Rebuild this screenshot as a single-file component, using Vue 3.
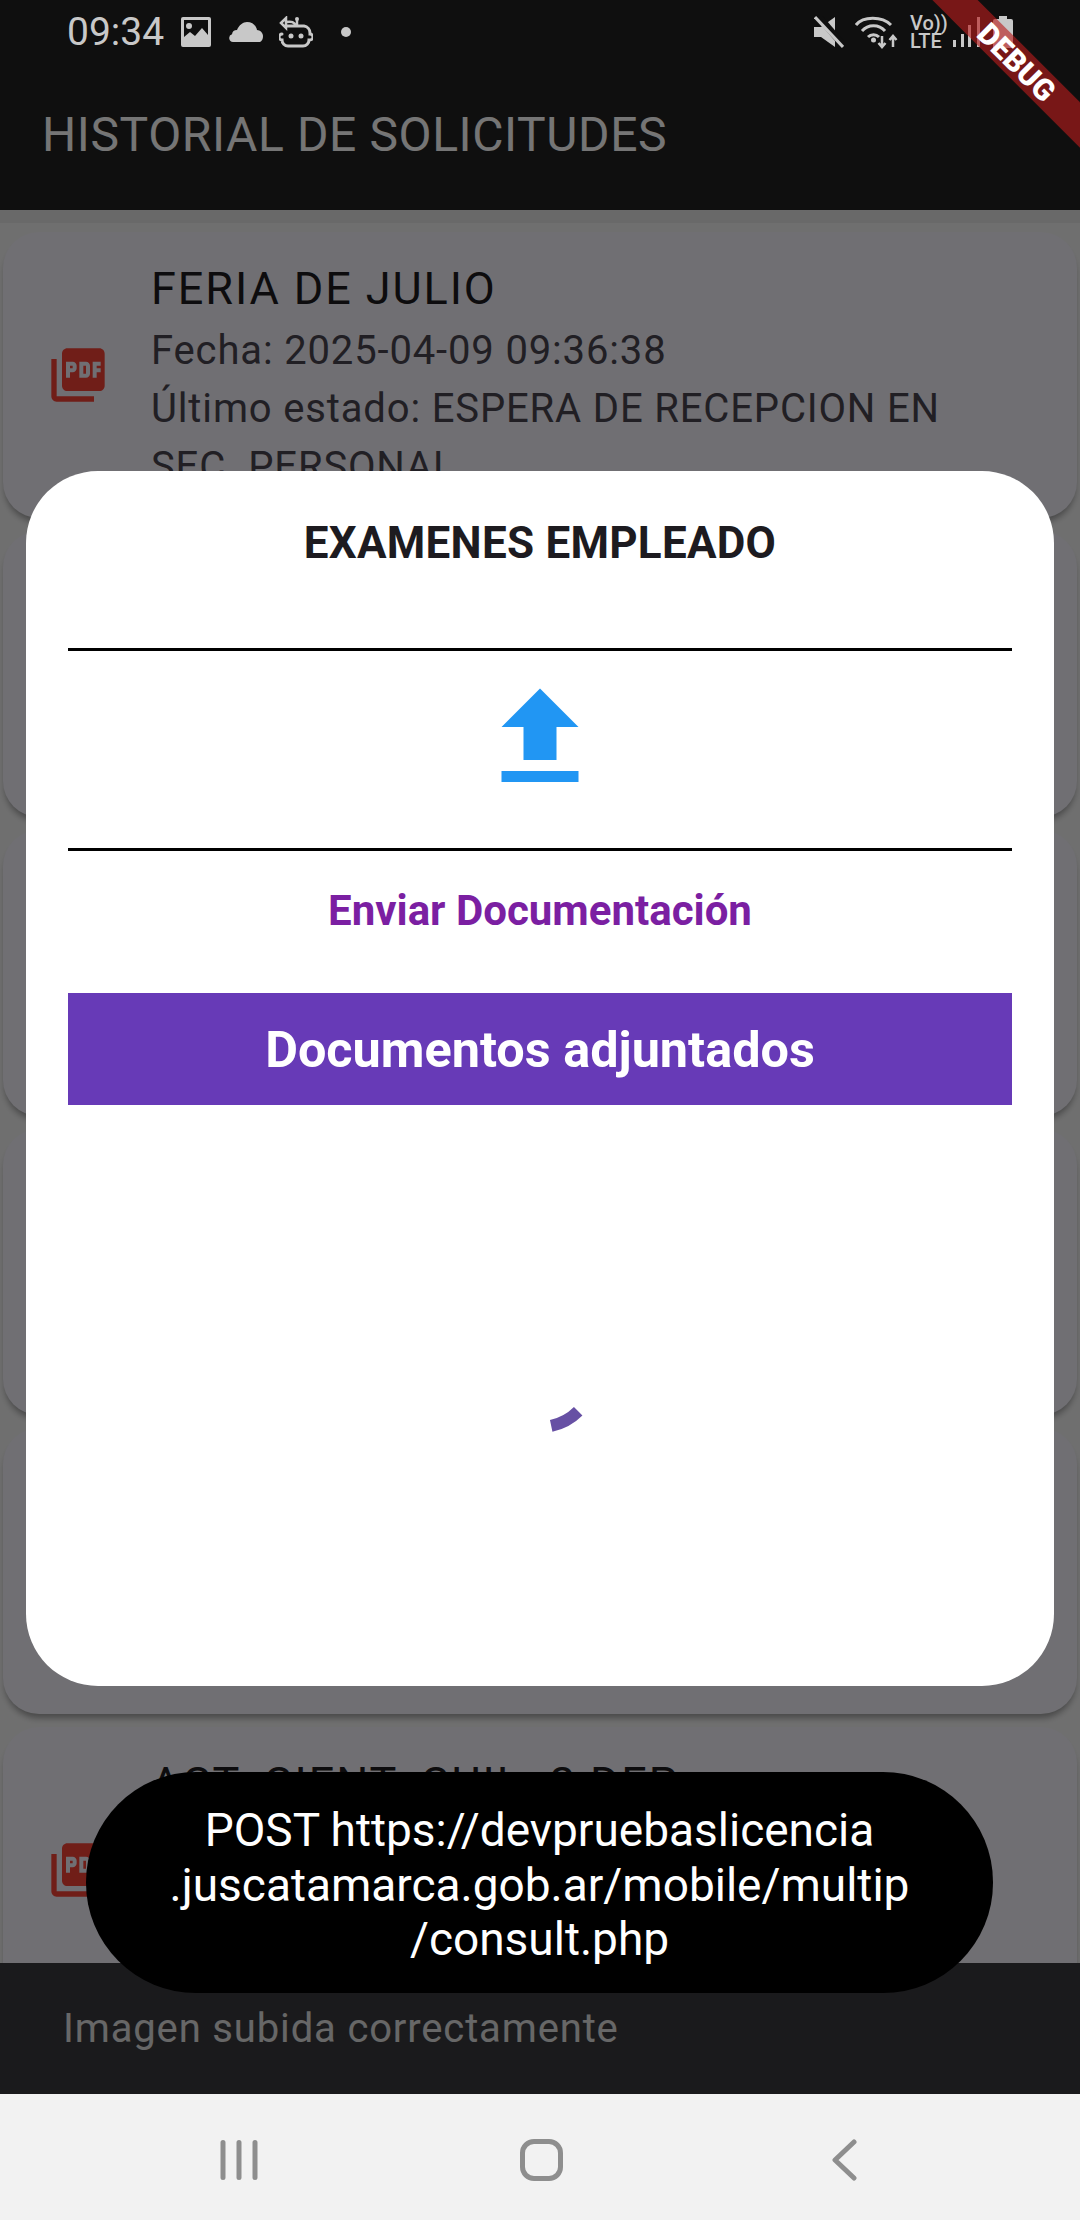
<script setup>
const cards = [
  { title: 'FERIA DE JULIO', lines: ['Fecha: 2025-04-09 09:36:38', 'Último estado: ESPERA DE RECEPCION EN SEC. PERSONAL'] },
  { title: '', lines: [] },
  { title: '', lines: [] },
  { title: '', lines: [] },
  { title: '', lines: [] },
  { title: 'ACT. CIENT. CUIL. 2 DEP', lines: [] },
]
</script>

<template>
  <div class="screen">
    <header class="appbar">
      <h1 class="appbar-title">HISTORIAL DE SOLICITUDES</h1>
    </header>
    <div class="appbar-edge"></div>

    <main class="list">
      <article v-for="(card, i) in cards" :key="i" class="card">
        <svg class="pdf" viewBox="0 0 24 24" width="64" height="64">
          <path fill="#f44336" d="M20 2H8c-1.1 0-2 .9-2 2v12c0 1.1.9 2 2 2h12c1.1 0 2-.9 2-2V4c0-1.1-.9-2-2-2zm-8.5 7.5c0 .83-.67 1.5-1.5 1.5H9v2H7.5V7H10c.83 0 1.5.67 1.5 1.5v1zm5 2c0 .83-.67 1.5-1.5 1.5h-2.5V7H15c.83 0 1.5.67 1.5 1.5v3zm4-3H19v1h1.5V11H19v2h-1.5V7h3v1.5zM9 9.5h1v-1H9v1zM4 6H2v14c0 1.1.9 2 2 2h14v-2H4V6zm10 5.5h1v-3h-1v3z" />
        </svg>
        <div class="card-text">
          <div class="card-title">{{ card.title }}</div>
          <div v-for="line in card.lines" :key="line" class="card-line">{{ line }}</div>
        </div>
      </article>
    </main>

    <footer class="snackbar">Imagen subida correctamente</footer>

    <nav class="navbar">
      <svg width="38" height="44" viewBox="0 0 38 44" class="nav-recents">
        <path d="M3 4.500v35M19 4.500v35M35 4.500v35" fill="none" stroke="#8e8e8e" stroke-width="5" stroke-linecap="round" />
      </svg>
      <div class="nav-home"></div>
      <svg width="26" height="44" viewBox="0 0 26 44" class="nav-back">
        <path d="M23 4 4 22l0 0 19 18" fill="none" stroke="#8e8e8e" stroke-width="5" stroke-linecap="round" stroke-linejoin="round" />
      </svg>
    </nav>

    <div class="scrim">
      <section class="modal">
        <h2 class="modal-title">EXAMENES EMPLEADO</h2>
        <div class="upload">
          <svg viewBox="0 0 24 24" width="132" height="132">
            <path fill="#2196f3" d="M9 16h6v-6h4l-7-7-7 7h4zm-4 2h14v2H5z" />
          </svg>
        </div>
        <div class="send">Enviar Documentación</div>
        <div class="docs-bar">Documentos adjuntados</div>
        <div class="docs-body">
          <svg width="120" height="120" viewBox="0 0 120 120">
            <path d="M71.2 112.800A54 54 0 0 0 98.200 98.200" fill="none" stroke="#6750a4" stroke-width="12" />
          </svg>
        </div>
      </section>
    </div>

    <div class="toast">
      <span>POST https://devpruebaslicencia</span>
      <span>.juscatamarca.gob.ar/mobile/multip</span>
      <span>/consult.php</span>
    </div>

    <div class="statusbar">
      <div class="status-left">
        <span class="time">09:34</span>
        <svg width="32" height="32" viewBox="0 0 32 32">
          <path fill="#c8c8c8" fill-rule="evenodd" d="M3 1h26a2 2 0 0 1 2 2v26a2 2 0 0 1-2 2H3a2 2 0 0 1-2-2V3a2 2 0 0 1 2-2zm1 3v17l6-5 5 4 7-8 6 7V4zM9 7a3 3 0 1 1 0 6 3 3 0 0 1 0-6z" />
        </svg>
        <svg class="cloud" width="34" height="20" viewBox="0 0 34 20">
          <path fill="#c8c8c8" d="M4 20a4 4 0 0 1-1-7.800 5 5 0 0 1 5-4.200C10 3 14 0 18 0c5 0 9 3 10 8 3 .3 6 2.500 6 6 0 4-2 6-4 6z" />
        </svg>
        <svg width="34" height="32" viewBox="0 0 34 32" fill="none" stroke="#c8c8c8" stroke-width="3">
          <path d="M8 10h17a7 7 0 0 1 6 7v1a2.500 2.500 0 0 1 0 6h-1a6 6 0 0 1-6 6H9a6 6 0 0 1-6-6 2.500 2.500 0 0 1 0-6" stroke-linecap="round" />
          <path d="M2 7 7 2v10zM7 6c6-1 8 0 10 4M18 10c0-3 0-5 0-6" stroke-width="2.500" />
          <circle cx="18" cy="3" r="2" fill="#c8c8c8" stroke="none" />
          <circle cx="12" cy="20" r="2.500" fill="#c8c8c8" stroke="none" />
          <circle cx="22" cy="20" r="2.500" fill="#c8c8c8" stroke="none" />
        </svg>
        <span class="dot"></span>
      </div>
      <div class="status-right">
        <svg width="30" height="32" viewBox="0 0 30 32">
          <path fill="#c8c8c8" d="M0 11h7L21 1v30L7 21H0z" />
          <path d="M4 0l26 30" stroke="#0f0f0f" stroke-width="7" />
          <path d="M1 1l28 30" stroke="#c8c8c8" stroke-width="3" />
        </svg>
        <svg width="44" height="34" viewBox="0 0 44 34" fill="none" stroke="#c8c8c8" stroke-width="3">
          <path d="M1 10C8 1 27 1 36 10M7 16C13 9 24 9 30 16M13 22c3-3 8-3 11 0" />
          <circle cx="18.500" cy="25" r="2.500" fill="#c8c8c8" stroke="none" />
          <path d="M27 21v11M23.500 28l3.500 4 3.500-4M38 32V21M34.500 25l3.500-4 3.500 4" stroke-width="2.500" />
        </svg>
        <div class="volte"><span>Vo))</span><span>LTE</span></div>
        <svg width="30" height="32" viewBox="0 0 30 32">
          <rect x="1" y="24" width="3" height="7" fill="#c8c8c8" />
          <rect x="9" y="18" width="3" height="13" fill="#c8c8c8" />
          <rect x="16" y="9" width="3" height="22" fill="#c8c8c8" />
          <rect x="25" y="1" width="3" height="30" fill="#c8c8c8" />
        </svg>
        <svg width="20" height="32" viewBox="0 0 20 32">
          <path fill="#c8c8c8" d="M6 0h8v3h4a2 2 0 0 1 2 2v27H0V5a2 2 0 0 1 2-2h4z" />
        </svg>
      </div>
    </div>

    <div class="banner"><span>DEBUG</span></div>
  </div>
</template>

<style>
html, body { margin: 0; padding: 0; background: #000; }
</style>

<style scoped>
.screen {
  position: relative;
  display: flex;
  flex-direction: column;
  width: 1080px;
  height: 2220px;
  overflow: hidden;
  background: #f2f2f2;
  font-family: Roboto, "Noto Sans", sans-serif;
}
.appbar {
  flex: none;
  display: flex;
  align-items: center;
  height: 152px;
  padding: 58px 0 0 42px;
  background: #212121;
}
.appbar-title {
  margin: 0;
  font-size: 48px;
  font-weight: 400;
  letter-spacing: 0.6px;
  color: #fff;
}
.appbar-edge {
  flex: none;
  height: 13px;
  background: #e4e4e4;
}
.list {
  flex: 1;
  min-height: 0;
  overflow: hidden;
  display: flex;
  flex-direction: column;
  gap: 13px;
  padding: 9px 3px 0;
}
.card {
  flex: none;
  display: flex;
  align-items: center;
  gap: 41px;
  height: 286px;
  padding: 0 60px 0 43px;
  border-radius: 36px;
  background: #f3f1fa;
  box-shadow: 0 6px 6px -2px rgba(0, 0, 0, 0.35);
  overflow: hidden;
}
.pdf { flex: none; }
.card-text { flex: 1; min-width: 0; align-self: flex-start; padding-top: 28px; }
.card-title {
  font-size: 45px;
  line-height: 58px;
  letter-spacing: 1.9px;
  color: #1d1b20;
  min-height: 58px;
  margin-bottom: 4px;
  white-space: nowrap;
}
.card-line {
  font-size: 40px;
  line-height: 58px;
  letter-spacing: 0.85px;
  color: #49454f;
}
.snackbar {
  flex: none;
  height: 131px;
  display: flex;
  align-items: center;
  padding-left: 63px;
  background: #39393d;
  color: #e0e0e0;
  font-size: 40px;
  letter-spacing: 0.85px;
}
.navbar {
  position: relative;
  z-index: 5;
  flex: none;
  display: flex;
  align-items: center;
  height: 120px;
  padding: 6px 0 0 220px;
  background: #f2f2f2;
}
.nav-home {
  box-sizing: border-box;
  width: 43px;
  height: 42px;
  margin-left: 262px;
  border: 5px solid #8e8e8e;
  border-radius: 14px;
}
.nav-back { margin-left: 268px; }
.scrim {
  position: absolute;
  inset: 0 0 126px 0;
  background: rgba(0, 0, 0, 0.54);
  display: flex;
  justify-content: center;
  align-items: flex-start;
  padding-top: 471px;
}
.modal {
  display: flex;
  flex-direction: column;
  box-sizing: border-box;
  width: 1028px;
  height: 1215px;
  padding: 0 42px;
  background: #fff;
  border-radius: 72px;
}
.modal-title {
  margin: 0;
  height: 177px;
  padding-top: 48px;
  box-sizing: border-box;
  text-align: center;
  font-size: 44px;
  line-height: 48px;
  letter-spacing: 0.25px;
  font-weight: 700;
  color: #1d1b20;
}
.upload {
  display: flex;
  justify-content: center;
  align-items: center;
  height: 197px;
  border-top: 3px solid #000;
  border-bottom: 3px solid #000;
  box-sizing: content-box;
}
.upload svg { margin-bottom: 24px; }
.send {
  margin-top: 36px;
  text-align: center;
  font-size: 42px;
  line-height: 48px;
  font-weight: 700;
  color: #7b1fa2;
}
.docs-bar {
  margin-top: 58px;
  height: 112px;
  display: flex;
  align-items: center;
  justify-content: center;
  background: #673ab7;
  color: #fff;
  font-size: 50.4px;
  font-weight: 700;
}
.docs-body {
  flex: 1;
  display: flex;
  justify-content: center;
  padding-top: 208px;
}
.toast {
  position: absolute;
  left: 86px;
  top: 1772px;
  box-sizing: border-box;
  width: 907px;
  height: 221px;
  padding-top: 5px;
  display: flex;
  flex-direction: column;
  align-items: center;
  justify-content: center;
  border-radius: 110px;
  background: #000;
  color: #fff;
  font-size: 46px;
  line-height: 54.5px;
  white-space: nowrap;
}
.statusbar {
  position: absolute;
  top: 0;
  left: 0;
  right: 0;
  height: 64px;
  display: flex;
  justify-content: space-between;
  align-items: center;
  padding: 0 67px;
  color: #c8c8c8;
}
.status-left, .status-right { display: flex; align-items: center; }
.status-left { gap: 16px; }
.status-right { gap: 11px; }
.time { font-size: 39px; }
.cloud { margin-left: 1px; }
.dot { width: 10px; height: 10px; margin-left: 12px; border-radius: 50%; background: #c8c8c8; }
.volte {
  display: flex;
  flex-direction: column;
  width: 31px;
  font-size: 20px;
  line-height: 18px;
  font-weight: 500;
}
.banner {
  position: absolute;
  left: 867px;
  top: 46px;
  width: 300px;
  height: 32px;
  display: flex;
  align-items: center;
  justify-content: center;
  transform: rotate(45deg);
  background: rgba(183, 28, 28, 0.627);
  color: #fff;
  font-size: 30px;
  font-weight: 900;
}
</style>
